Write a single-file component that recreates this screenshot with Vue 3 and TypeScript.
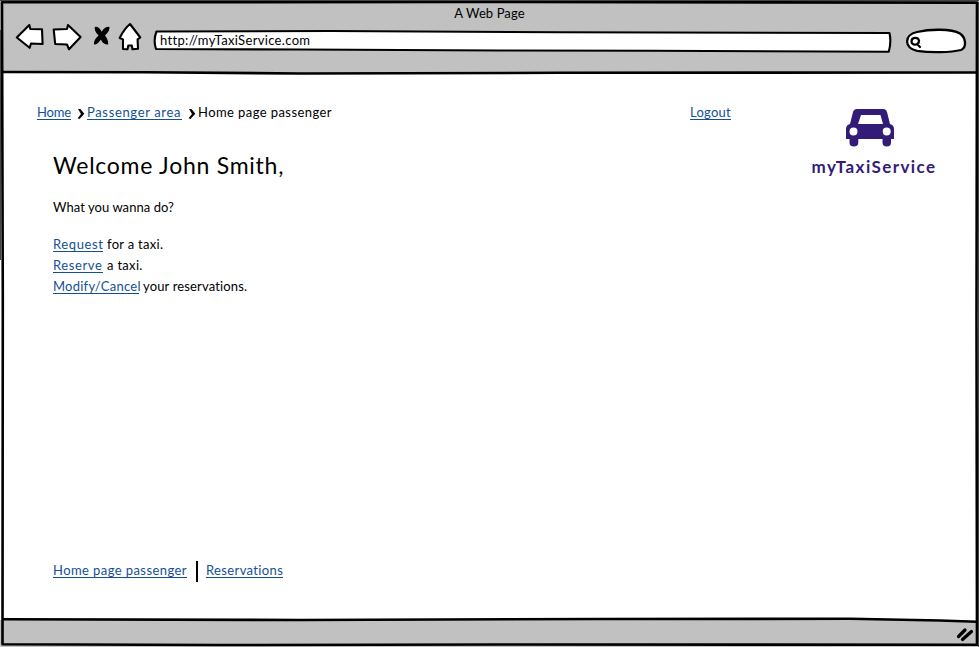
<script setup lang="ts">
interface Crumb { label: string; kind: string; link: boolean }
interface Action { link: string; rest: string; kind: string }

const crumbs: Crumb[] = [
  { label: 'Home', kind: 'home', link: true },
  { label: 'Passenger area', kind: 'area', link: true },
  { label: 'Home page passenger', kind: 'current', link: false },
]

const actions: Action[] = [
  { link: 'Request', rest: 'for a taxi.', kind: 'request' },
  { link: 'Reserve', rest: 'a taxi.', kind: 'reserve' },
  { link: 'Modify/Cancel', rest: 'your reservations.', kind: 'modify' },
]
</script>

<template>
  <div class="window">
    <header class="chrome">
      <div class="title">A Web Page</div>
      <div class="toolbar">
        <svg class="nav" width="140" height="32" viewBox="10 21 140 32">
          <g fill="#fff" stroke="#000" stroke-width="2.1" stroke-linejoin="round" stroke-linecap="round">
            <path d="M16.800 37.500 L29.300 25 L30.300 29 L42 29.200 L42.600 44 L31 43.500 L29.600 47.800 Z" />
            <path d="M53.700 29.500 L67 29 L68 25 L80.600 37 L69 49.300 L67 44.500 L55.200 44 Z" />
            <path d="M130 24 L140.300 37.500 L137.600 39.400 L138 48.700 L132.500 49.300 L131.800 45.500 L128.300 45.500 L127.500 49.300 L123 49 L123 39.400 L119.600 38 Q124.500 28.500 130 24 Z" />
          </g>
          <path d="M94.800 27 Q98.500 26 101.800 31.800 Q104.500 26.500 109.300 26.800 Q110.500 30 105 35.500 Q108.500 40 108.200 44.500 Q103.500 45 100.800 39.500 Q97.500 45 94 44.500 Q93 40.500 98.500 35.500 Q94 31 94.800 27 Z" />
        </svg>
        <div class="address">
          <svg class="shape" width="741" height="26" viewBox="152 28 741 26">
            <path d="M156.500 31.500 L330 31 L560 32.300 L889.500 33 Q891.500 42 888.800 51.700 L650 50.800 L500 50.500 L300 49.500 L156 49 Q153 40 156.500 31.500 Z" fill="#fff" stroke="#000" stroke-width="2.1" stroke-linejoin="round" />
          </svg>
          <span class="url">http://myTaxiService.com</span>
        </div>
        <svg class="search" width="64" height="28" viewBox="904 27 64 28">
          <path d="M917 50.800 C904 48 903.500 35 917 32 C930 29 951 28.500 960 33.500 C966 38 967 47 961 50 C951 52.500 931 53 917 50.800 Z" fill="#fff" stroke="#000" stroke-width="2.3" />
          <path d="M919 40.500 C918 36.800 911.500 37 911.500 41.500 C911.500 46 919 45.600 919 40.500 M917 44 L920 47" fill="none" stroke="#000" stroke-width="2.200" stroke-linecap="round" />
        </svg>
      </div>
    </header>

    <main class="page">
      <div class="top">
        <nav class="crumbs">
          <template v-for="(c, i) in crumbs" :key="c.label">
            <svg v-if="i" class="chevron" width="8" height="12" viewBox="0 0 8 12">
              <path d="M1 1 L3.500 1 L7.300 5.700 L2.500 11 L.6 10.300 L4 6 Z" />
            </svg>
            <a v-if="c.link" class="link" :class="c.kind">{{ c.label }}</a>
            <span v-else :class="c.kind">{{ c.label }}</span>
          </template>
        </nav>
        <a class="link logout">Logout</a>
        <div class="brand">
          <svg class="car" width="50" height="40" viewBox="845 108 50 40">
            <path fill="#331b78" fill-rule="evenodd" d="M857 109 H883 Q886 109 887 112 L890 124 Q894 125 894 129 V139 H891 V142.500 Q891 146.500 887 146.500 Q882.500 146.500 882.500 142.500 V139 H858.300 V142.500 Q858.300 146.500 853.800 146.500 Q849.500 146.500 849.500 142.500 V139 H846 V129 Q846 125 850 124 L853 112 Q854 109 857 109 Z M861 115 L858 124 H883 L880.500 115 Z M853.500 127.500 A4 4 0 1 0 853.500 135.500 A4 4 0 1 0 853.500 127.500 Z M886.700 127.500 A4 4 0 1 0 886.700 135.500 A4 4 0 1 0 886.700 127.500 Z" />
          </svg>
          <span class="name">myTaxiService</span>
        </div>
      </div>

      <section class="body">
        <h1>Welcome John Smith,</h1>
        <p class="ask">What you wanna do?</p>
        <ul>
          <li v-for="a in actions" :key="a.kind" :class="a.kind">
            <a class="link">{{ a.link }}</a><span class="rest">{{ a.rest }}</span>
          </li>
        </ul>
      </section>

      <nav class="foot">
        <a class="link page-link">Home page passenger</a>
        <i class="divider"></i>
        <a class="link reservations">Reservations</a>
      </nav>
    </main>

    <footer class="status"></footer>

    <svg class="outline" width="979" height="647" viewBox="0 0 979 647">
      <path d="M800 618 L976 618 V622 Z" fill="#fff" />
      <g fill="none" stroke="#000" stroke-width="2.600" stroke-linejoin="round">
        <path d="M2 2.300 L480 2 L977 2.600 L976.500 320 L977 644.800 L500 644.500 L220 645 L2.500 644.300 L2.800 300 Z" />
        <path d="M2 72 L145 72.300 L300 73.500 L560 72.800 L977 72.500" />
        <path d="M3 619.300 L300 620 L600 619 L850 618.800 L940 620.500 L977 621.800" />
      </g>
      <path d="M0 .5 H979 M978.500 2 V647 M.5 30 V260" fill="none" stroke="#444" stroke-width="1" />
      <path d="M958.500 636.500 L965 630 M962.500 639.500 L971.500 631.500" stroke="#000" stroke-width="3.200" stroke-linecap="round" />
    </svg>
  </div>
</template>

<style>
body { margin: 0; background: #fff; }
</style>

<style scoped>
.window {
  position: relative;
  display: flex;
  flex-direction: column;
  width: 979px;
  height: 647px;
  overflow: hidden;
  background: #fff;
  color: #000;
  font: 13px/16px Lato, "Open Sans", sans-serif;
  white-space: nowrap;
}
.chrome { height: 73px; background: #c1c1c1; }
.title { height: 21px; padding-top: 5px; box-sizing: border-box; text-align: center; letter-spacing: .1px; }
.toolbar { display: flex; align-items: flex-start; padding-left: 10px; }
.nav { flex: none; }
.address { display: grid; margin: 7px 11px 0 2px; }
.address > * { grid-area: 1 / 1; }
.url { padding: 4px 0 0 8px; letter-spacing: .33px; }
.search { margin-top: 6px; }
.page { flex: 1; display: flex; flex-direction: column; }
.top { display: flex; align-items: flex-start; height: 77px; padding: 31px 0 0 37px; }
.crumbs { display: flex; width: 653px; }
.chevron { margin: 4px 2px 0 6px; }
.link { display: inline-block; box-sizing: border-box; height: 16px; line-height: 16px; color: #144f96; border-bottom: 1px solid #144f96; }
.home { width: 34px; letter-spacing: -.2px; }
.area { width: 95px; letter-spacing: .65px; }
.current { letter-spacing: .42px; }
.logout { width: 41px; letter-spacing: .25px; }
.brand { display: flex; flex-direction: column; align-items: center; width: 126px; margin: 4px 0 0 80px; color: #331b78; }
.car { margin-left: -8px; }
.name { margin-top: 9px; font-size: 17px; line-height: 20px; font-weight: 700; letter-spacing: 1.4px; }
.body { padding-left: 53px; margin-top: -31px; }
h1 { margin: 0; font-size: 23px; line-height: 30px; font-weight: 400; letter-spacing: .74px; }
.ask { margin: 19px 0 0; letter-spacing: .06px; }
ul { margin: 21px 0 0; padding: 0; list-style: none; }
li { display: flex; height: 21px; }
.rest { margin-left: 4px; letter-spacing: .3px; }
.request .link, .reserve .link { width: 50px; letter-spacing: .6px; }
.modify .link { width: 86px; letter-spacing: .24px; }
.modify .rest { letter-spacing: .15px; }
.foot { display: flex; margin: auto 0 38px 53px; }
.divider { width: 2px; height: 21px; margin: -1px 8px 0 9px; background: #000; }
.page-link { width: 134px; letter-spacing: .42px; }
.reservations { width: 77px; letter-spacing: .37px; }
.status { height: 27px; background: #c1c1c1; }
.outline { position: absolute; inset: 0; pointer-events: none; }
</style>
